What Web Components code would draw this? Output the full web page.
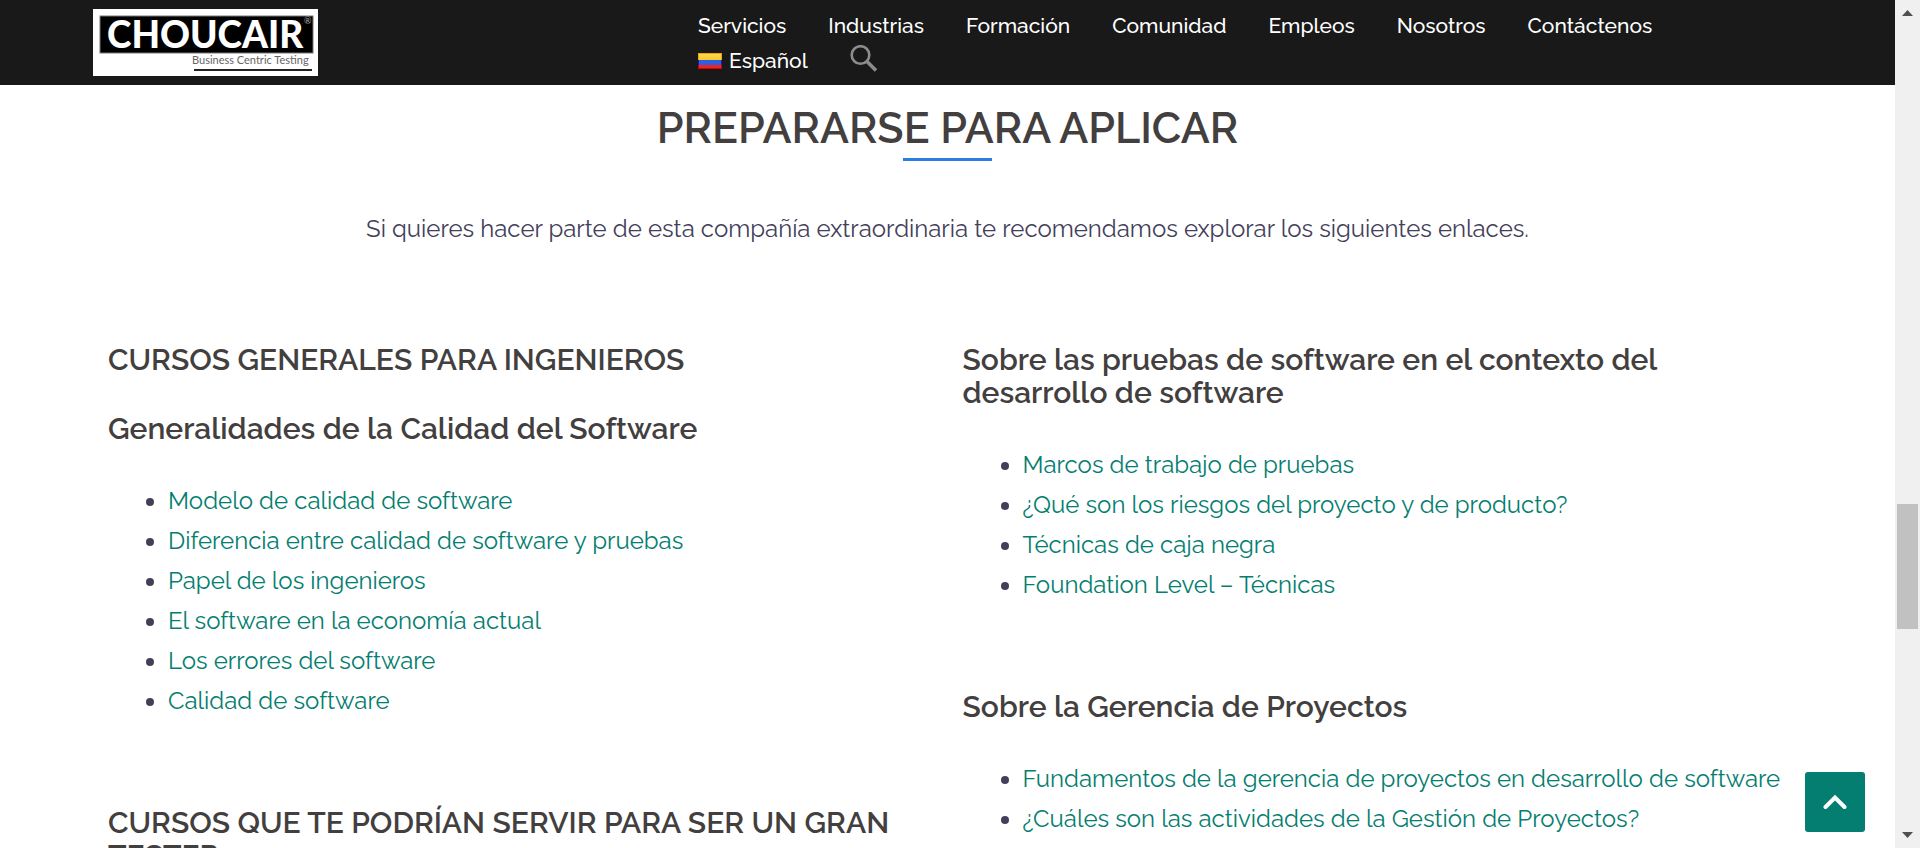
<!DOCTYPE html>
<html lang="es">
<head>
<meta charset="utf-8">
<title>Choucair – Prepararse para aplicar</title>
<style>
html, body { margin: 0; height: 100%; overflow: hidden; background: #fff; }
body { font-family: Raleway, "Open Sans", sans-serif; font-size: 24px; line-height: 40px; color: #433f5b; }
</style>
</head>
<body>
<page-shell>
  <site-header slot="header"></site-header>
  <section-title>PREPARARSE PARA APLICAR
    <span slot="lead">Si quieres hacer parte de esta compañía extraordinaria te recomendamos explorar los siguientes enlaces.</span>
  </section-title>
  <course-columns>
    <course-group slot="left">
      <course-heading>CURSOS GENERALES PARA INGENIEROS</course-heading>
      <course-heading>Generalidades de la Calidad del Software</course-heading>
      <link-list items="Modelo de calidad de software|Diferencia entre calidad de software y pruebas|Papel de los ingenieros|El software en la economía actual|Los errores del software|Calidad de software"></link-list>
    </course-group>
    <course-group slot="left">
      <course-heading>CURSOS QUE TE PODRÍAN SERVIR PARA SER UN GRAN TESTER</course-heading>
    </course-group>
    <course-group slot="right">
      <course-heading>Sobre las pruebas de software en el contexto del desarrollo de software</course-heading>
      <link-list items="Marcos de trabajo de pruebas|¿Qué son los riesgos del proyecto y de producto?|Técnicas de caja negra|Foundation Level – Técnicas"></link-list>
    </course-group>
    <course-group slot="right">
      <course-heading>Sobre la Gerencia de Proyectos</course-heading>
      <link-list items="Fundamentos de la gerencia de proyectos en desarrollo de software|¿Cuáles son las actividades de la Gestión de Proyectos?"></link-list>
    </course-group>
  </course-columns>
  <back-to-top slot="overlay"></back-to-top>
  <scroll-track slot="track"></scroll-track>
</page-shell>

<script>
const define = (name, html, setup) => customElements.define(name, class extends HTMLElement {
  connectedCallback() {
    if (this.shadowRoot) return;
    const root = this.attachShadow({ mode: 'open' });
    const template = document.createElement('template');
    template.innerHTML = html;
    root.append(template.content.cloneNode(true));
    if (setup) setup(this, root);
  }
});

define('page-shell', `
<style>
:host { display: flex; height: 100vh; }
.view { flex: 1; min-width: 0; position: relative; display: flex; flex-direction: column; overflow: hidden; }
main { flex: 1; min-height: 0; overflow: hidden; }
</style>
<div class="view"><slot name="header"></slot><main><slot></slot></main><slot name="overlay"></slot></div>
<slot name="track"></slot>`);

define('brand-logo', `
<style>
:host { display: block; flex: none; }
a, svg { display: block; }
</style>
<a href="#" aria-label="Choucair Business Centric Testing">
<svg width="225" height="67" viewBox="0 0 225 67">
  <rect width="225" height="67" fill="#fff"/>
  <rect x="7" y="7" width="213" height="37" fill="#000" stroke="#777"/>
  <text x="14" y="39" font-family="Lato, sans-serif" font-weight="900" font-size="37" fill="#fff">CHOUCAIR</text>
  <text x="211" y="15" font-family="Lato, sans-serif" font-size="9" fill="#aaa">®</text>
  <text x="99" y="55" font-family="Lato, sans-serif" font-size="11" fill="#666">Business Centric Testing</text>
  <rect x="101" y="60" width="118" height="2" fill="#222"/>
</svg></a>`);

define('flag-co', `
<style>:host { display: block; } svg { display: block; }</style>
<svg width="24" height="16" viewBox="0 0 24 16">
  <defs><linearGradient id="g" x1="0" y1="0" x2="0" y2="1"><stop offset="0" stop-color="#ffd95c"/><stop offset="1" stop-color="#f4c81c"/></linearGradient></defs>
  <rect width="24" height="8" fill="url(#g)"/>
  <rect y="7" width="24" height="5" fill="#2f5fdc"/>
  <rect y="12" width="24" height="4" fill="#ee2424"/>
  <path d="M0 7V0H24V7H23V1H1V7Z" fill="#eba800"/>
  <path d="M0 7H1V12H0ZM23 7H24V12H23Z" fill="#0c1cc0"/>
  <path d="M0 12H1V15H23V12H24V16H0Z" fill="#d80000"/>
</svg>`);

define('site-header', `
<style>
:host { display: flex; flex: none; align-items: flex-start; background: #191919; padding: 9px 93px; }
brand-logo { width: 225px; }
nav { flex: 1; margin: -1px 100px -2px 380px; }
ul { list-style: none; display: flex; flex-wrap: wrap; column-gap: 42px; margin: 0; padding: 0; }
li { height: 35px; }
a { display: flex; align-items: center; gap: 7px; color: #fff; text-decoration: none; font-size: 21px; line-height: 35px; font-weight: 500; }
button { display: block; border: 0; background: none; padding: 2px 0; margin: 0; }
svg { display: block; }
</style>
<brand-logo></brand-logo>
<nav><ul>
<li><a href="#">Servicios</a></li><li><a href="#">Industrias</a></li><li><a href="#">Formación</a></li>
<li><a href="#">Comunidad</a></li><li><a href="#">Empleos</a></li><li><a href="#">Nosotros</a></li><li><a href="#">Contáctenos</a></li>
<li><a href="#"><flag-co></flag-co>Español</a></li>
<li><button type="button" aria-label="Buscar"><svg width="28" height="27" viewBox="0 0 28 27" fill="none" stroke="#8c8c8c"><circle cx="10.5" cy="10" r="8.8" stroke-width="2.6"/><path d="M17 16.5L26 25.5" stroke-width="3.6"/></svg></button></li>
</ul></nav>`);

define('section-title', `
<style>
:host { display: flex; flex-direction: column; align-items: center; padding: 17px 93px 0; text-align: center; }
h2 { margin: 0; color: #433f3f; font-size: 43px; line-height: 52px; font-weight: 600; }
hr { width: 89px; height: 3px; margin: 4px 0 0; border: 0; background: #2b7de1; }
p { margin: 48px 0 0; }
</style>
<h2><slot></slot></h2><hr><p><slot name="lead"></slot></p>`);

define('course-columns', `
<style>
:host { display: grid; grid-template-columns: 1fr 1fr; padding: 94px 93px 0; }
section { display: flex; flex-direction: column; gap: 85px; padding: 0 15px; }
</style>
<section><slot name="left"></slot></section>
<section><slot name="right"></slot></section>`);

define('course-group', `
<style>:host { display: flex; flex-direction: column; gap: 36px; }</style><slot></slot>`);

define('course-heading', `
<style>
:host { display: block; }
h3 { margin: 0; color: #433f3f; font-size: 30px; line-height: 33px; font-weight: 600; }
</style>
<h3><slot></slot></h3>`);

define('link-list', `
<style>
:host { display: block; }
ul { margin: 0; padding: 0 0 0 60px; }
a { color: #047e70; text-decoration: none; }
</style>
<ul></ul>`, (host, root) => {
  const ul = root.querySelector('ul');
  for (const text of host.getAttribute('items').split('|')) {
    const a = document.createElement('a');
    a.href = '#';
    a.textContent = text;
    const li = document.createElement('li');
    li.append(a);
    ul.append(li);
  }
});

define('back-to-top', `
<style>
:host { display: block; position: absolute; right: 30px; bottom: 16px; }
button { display: grid; place-items: center; width: 60px; height: 60px; border: 0; border-radius: 3px; padding: 0; background: #047e70; }
</style>
<button type="button" aria-label="Volver arriba"><svg width="24" height="16" viewBox="0 0 24 16" fill="none" stroke="#fff" stroke-width="4" stroke-linecap="round"><path d="M2.5 13L12 3.5L21.5 13" stroke-linejoin="miter"/></svg></button>`);

define('scroll-track', `
<style>
:host { display: flex; flex-direction: column; align-items: center; flex: none; width: 25px; background: #f0f0f0; }
svg { display: block; flex: none; margin: 10px 0; }
.before { flex: 478; } .thumb { flex: 125; width: 21px; background: #c1c1c1; } .after { flex: 193; }
</style>
<svg width="11" height="6"><path d="M0 6L5.5 0L11 6Z" fill="#505050"/></svg>
<div class="before"></div><div class="thumb"></div><div class="after"></div>
<svg width="11" height="6"><path d="M0 0L5.5 6L11 0Z" fill="#505050"/></svg>`);
</script>
</body>
</html>
